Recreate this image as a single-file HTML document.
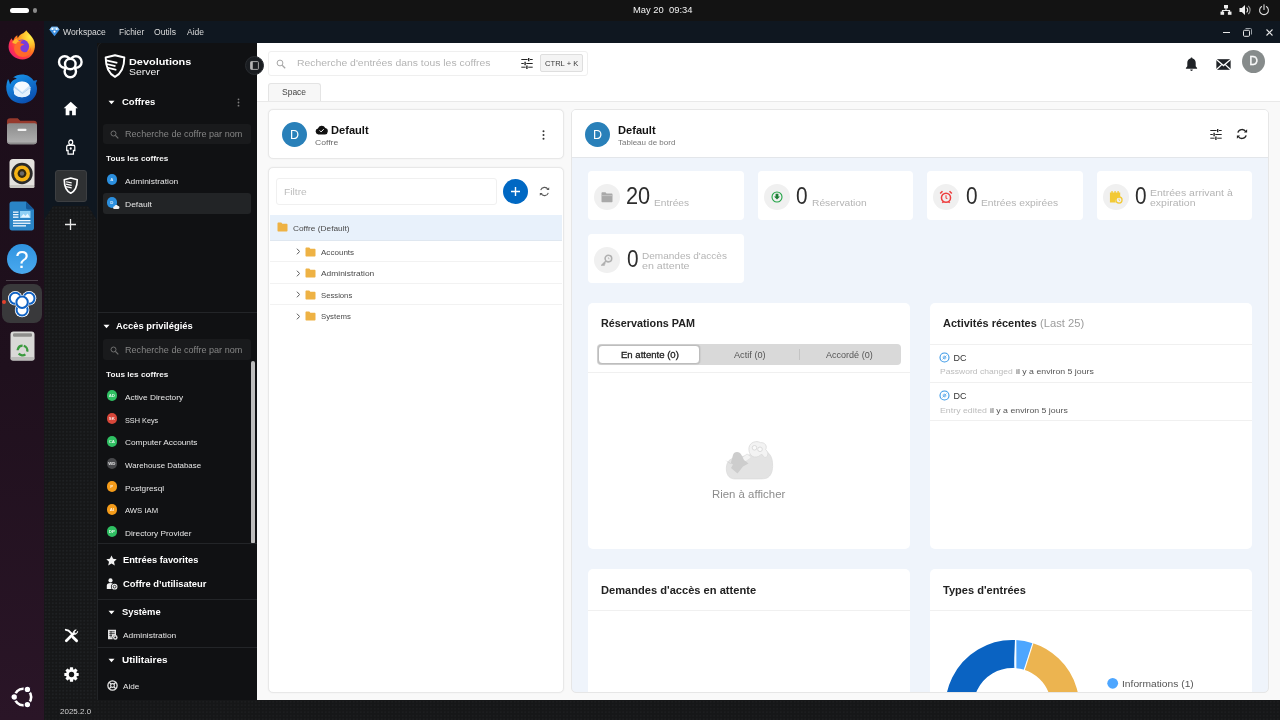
<!DOCTYPE html>
<html lang="fr">
<head>
<meta charset="utf-8">
<title>Workspace</title>
<style>
*{box-sizing:border-box;margin:0;padding:0}
html,body{width:1280px;height:720px;overflow:hidden;background:#131313;font-family:"Liberation Sans",sans-serif;}
.abs{position:absolute}
#root{position:relative;will-change:transform;width:1280px;height:720px;overflow:hidden}
.t{position:absolute;white-space:nowrap;line-height:1;transform-origin:0 50%}
/* top bar */
#topbar{left:0;top:0;width:1280px;height:21px;background:#131313}
/* dock */
#dock{left:0;top:21px;width:44px;height:699px;background:linear-gradient(#1c0e1a,#1f101d 50%,#2a1527 100%)}
/* app */
#titlebar{left:44px;top:21px;width:1236px;height:21.500px;background:#0f1720;z-index:3}
#iconbar{left:44px;top:42px;width:53px;height:658px;background:#0f1720}
#iconbar:before{content:'';position:absolute;left:0;top:164px;width:53px;height:494px;background:radial-gradient(circle,#222427 0.5px,rgba(34,36,39,0) 0.9px) 0 0/3.5px 3.5px,#161718;clip-path:polygon(9px 0,44px 0,53px 14px,53px 100%,0 100%,0 14px)}
#sidebar{left:97px;top:42px;width:160px;height:658px;background:#101113;border-top-left-radius:7px;box-shadow:inset 1px 0 0 #222427}
#bottombar{left:44px;top:700px;width:1236px;height:20px;background:radial-gradient(circle,#1f2022 0.5px,rgba(31,32,34,0) 0.9px) 0 0/3.5px 3.5px,#161718}
#main{left:257px;top:42px;width:1023px;height:658px;background:#fff}
.sbt{color:#e6e6e6;font-size:9px}
.sbh{color:#fff;font-size:10.5px;font-weight:bold}
.sdiv{position:absolute;left:0;width:160px;height:1px;background:#232528}
.ci{position:absolute;width:10.600px;height:10.600px;margin:0.200px 0 0 0;border-radius:50%;color:rgba(255,255,255,.85);font-size:4.300px;font-weight:bold;text-align:center;line-height:12px}
.card{position:absolute;background:#fff;border:1px solid #e8e8e8;border-radius:5px;box-shadow:0 0 1.5px rgba(0,0,0,.07)}
.stat{position:absolute;background:#fff;border-radius:4px;height:49px;width:156px}
.stat .ic{position:absolute;left:6px;top:13px;width:26px;height:26px;border-radius:50%;background:#f0f0f0}
.stat .n{position:absolute;left:38px;top:14px;font-size:24px;color:#2e2e2e;line-height:1}
.stat .l{position:absolute;transform-origin:0 50%;font-size:10.5px;color:#b4b4b4;line-height:10px;white-space:nowrap}
.trow{position:absolute;left:1px;width:291px;height:21px;border-bottom:1px solid #f1f1f1}
.trow .tx{position:absolute;left:50px;top:6px;font-size:8.5px;color:#555;line-height:1;white-space:nowrap}
</style>
</head>
<body>
<div id="root">

<!-- ===== TOP BAR ===== -->
<div id="topbar" class="abs">
  <div class="abs" style="left:10px;top:8px;width:19px;height:5px;border-radius:3px;background:#fff"></div>
  <div class="abs" style="left:33px;top:8px;width:4px;height:5px;border-radius:2px;background:#8a8a8a"></div>
  <div class="t" style="left:633px;top:5.003px;font-size:9.400px;color:#f2f2f2">May 20&nbsp;&nbsp;09:34</div>
  <svg class="abs" style="left:1220px;top:4px" width="12" height="12" viewBox="0 0 12 12"><g fill="#eee"><rect x="4" y="1" width="4" height="3.4"/><rect x="0.5" y="7.6" width="3.6" height="3.2"/><rect x="7.9" y="7.6" width="3.6" height="3.2"/><path d="M5.5 4h1v2h3.6v2h-1V7H2.9v1h-1V6h3.6z"/></g></svg>
  <svg class="abs" style="left:1239px;top:4px" width="13" height="12" viewBox="0 0 13 12"><path d="M0.5 4h2.3L6 1v10L2.8 8H0.5z" fill="#eee"/><path d="M7.6 3.6a3.2 3.2 0 0 1 0 4.8" stroke="#eee" stroke-width="1.1" fill="none"/><path d="M9.2 1.8a5.6 5.6 0 0 1 0 8.4" stroke="#999" stroke-width="1.1" fill="none"/></svg>
  <svg class="abs" style="left:1258px;top:4px" width="12" height="12" viewBox="0 0 12 12"><path d="M3.6 2.5a4.4 4.4 0 1 0 4.8 0" stroke="#ddd" stroke-width="1.1" fill="none" stroke-linecap="round"/><path d="M6 0.8v4.6" stroke="#ddd" stroke-width="1.1" stroke-linecap="round"/></svg>
</div>

<!-- ===== DOCK ===== -->
<div id="dock" class="abs">
  <!-- Firefox -->
  <svg class="abs" style="left:6.500px;top:8.500px" width="31" height="31" viewBox="0 0 30 30">
    <defs>
      <radialGradient id="ffg" cx="0.82" cy="0.22" r="1.05"><stop offset="0" stop-color="#fff04a"/><stop offset="0.28" stop-color="#ffbd2a"/><stop offset="0.5" stop-color="#ff7a1f"/><stop offset="0.72" stop-color="#ff3647"/><stop offset="1" stop-color="#e31587"/></radialGradient>
    </defs>
    <path d="M15 3.5c1.5-1 2.8-2 3.600-3.300c1.200 2 3.500 3.500 5.500 6.500c2.200 3 3.200 6 2.900 9.800C26.400 23.500 21.500 28.500 15 28.500S1.500 23.500 1.500 16.500c0-3.500 1.200-6.500 3-8.500c0.300 1.200 0.800 2 1.500 2.600c0.500-2.500 2-4.500 4-5.600c-0.200 1 0 2 0.500 2.800C11.500 5.800 13 4.500 15 3.500z" fill="url(#ffg)"/>
    <circle cx="14.600" cy="16" r="6.800" fill="#7a3ddb"/>
    <path d="M8.500 13c1.500-2.500 4.500-3.600 7.500-3c-2 0.600-3 1.800-3 3c1.500 0 3 0.400 3.800 1.200c-2.500 0.300-3.600 1.500-3.800 3c-0.200 1.800 1 3.800 3.500 4.300c3 0.600 6-1.500 6.500-4.800c0.800 3.500-1 7.500-5 9c-4.500 1.500-9.500-1-10.800-5.500C6.500 18 7 15 8.500 13z" fill="#ff6a2a"/>
    <path d="M5 12c1-2 2.500-3.200 4.500-3.800c0.500 1.300 1.500 2.300 3 2.800c-1.500 0.200-3 1.200-3.800 2.500C7.500 13 6 12.800 5 12z" fill="#ffb52e"/>
  </svg>
  <!-- Thunderbird -->
  <svg class="abs" style="left:5px;top:51px" width="34" height="33" viewBox="0 0 34 33">
    <defs><linearGradient id="tbg" x1="0" y1="0" x2="0.6" y2="1"><stop offset="0" stop-color="#1a9bf0"/><stop offset="1" stop-color="#0a4fb0"/></linearGradient></defs>
    <path d="M3 7c-2 5-2.500 10-0.500 15c2.500 6 8 9.500 14.500 9.500c8.500 0 15-6.500 15-14.500c0-2-0.400-4-1.200-5.600l1.400-3.400l-3.500 0.800C26 4.500 21.500 2.500 17 2.500c-3.500 0-6.500 1-9 3c1.500 0 2.800 0.500 3.800 1.300C8.500 7.500 6 9.500 5 12.500C4.800 10.500 4 8.500 3 7z" fill="url(#tbg)"/>
    <ellipse cx="17" cy="17.500" rx="8.600" ry="7.800" fill="#cfe4f8"/>
    <path d="M9 15l8 6.500L25 15v7c-2 2.200-4.500 3.300-8 3.300s-6-1.100-8-3.300z" fill="#e6f2fd"/>
    <path d="M9.500 13.500L17 20l7.500-6.500c-1.500-2.500-4-4-7.500-4s-6 1.500-7.500 4z" fill="#f7fbff"/>
    <path d="M9 15l8.500 6.500L26 15" stroke="#a8cdf0" stroke-width="0.800" fill="none"/>
  </svg>
  <!-- Files -->
  <svg class="abs" style="left:6px;top:95px" width="32" height="30" viewBox="0 0 32 30">
    <path d="M1 5.500c0-2 1.200-3.200 3.200-3.200h7.500l2.500 2.400h13.600c2 0 3.200 1.200 3.200 3.200v4H1z" fill="#96392c"/>
    <defs><linearGradient id="flg" x1="0" y1="0" x2="0" y2="1"><stop offset="0" stop-color="#8a8a8a"/><stop offset="1" stop-color="#b2b2b2"/></linearGradient></defs><path d="M1 9.500c0-1.400 1-2.300 2.400-2.300h25.200c1.400 0 2.400 0.900 2.400 2.300v15.500c0 2-1.200 3.200-3.200 3.200H4.200c-2 0-3.200-1.200-3.200-3.200z" fill="url(#flg)"/>
    <path d="M1 24v1c0 2 1.200 3.200 3.200 3.200h23.600c2 0 3.200-1.200 3.200-3.200v-1c0 1.600-1.200 2.600-3.200 2.600H4.200C2.200 26.600 1 25.600 1 24z" fill="#8c8c8c"/>
    <rect x="11.500" y="12.800" width="9" height="2.200" rx="1" fill="#f4f4f4"/>
  </svg>
  <!-- Rhythmbox -->
  <svg class="abs" style="left:8px;top:137px" width="28" height="31" viewBox="0 0 28 31">
    <rect x="1.500" y="1" width="25" height="29" rx="3.500" fill="#e4e2de"/>
    <rect x="1.500" y="27" width="25" height="3" rx="1.500" fill="#c9c7c2"/>
    <circle cx="14" cy="15.500" r="10.700" fill="#2a2a2a"/>
    <circle cx="14" cy="15.500" r="8" fill="#f6b313"/>
    <circle cx="14" cy="15.500" r="4.400" fill="#33280f"/>
    <circle cx="14" cy="15.500" r="2.200" fill="#6a6a6a"/>
  </svg>
  <!-- Writer -->
  <svg class="abs" style="left:9px;top:179px" width="26" height="32" viewBox="0 0 26 32">
    <path d="M3 1.500h14l8 8V28c0 1.500-1 2.500-2.500 2.500h-19.500C1.500 30.500 0.500 29.500 0.500 28V4C0.500 2.500 1.500 1.500 3 1.500z" fill="#2a84c6"/>
    <path d="M17 1.500l8 8h-6c-1.200 0-2-0.800-2-2z" fill="#14599a"/>
    <rect x="11" y="11" width="10.500" height="7" fill="#8fd0f5"/>
    <path d="M11.500 17.500l3-3.500 2 2 2-2.500 2.500 4z" fill="#e8f6ff"/>
    <g fill="#f2f9ff"><rect x="4" y="11.500" width="5.500" height="1.300"/><rect x="4" y="14" width="5.500" height="1.300"/><rect x="4" y="16.500" width="5.500" height="1.300"/><rect x="4" y="20" width="17.500" height="1.300"/><rect x="4" y="22.600" width="17.500" height="1.300"/><rect x="4" y="25.200" width="13" height="1.300"/></g>
  </svg>
  <!-- Help -->
  <svg class="abs" style="left:6px;top:222px" width="32" height="32" viewBox="0 0 32 32">
    <defs><linearGradient id="hg" x1="0" y1="0" x2="0" y2="1"><stop offset="0" stop-color="#2f93e0"/><stop offset="1" stop-color="#4aa9ee"/></linearGradient></defs>
    <circle cx="16" cy="16" r="15" fill="url(#hg)"/>
    <text x="16" y="24.500" font-family="Liberation Sans, sans-serif" font-size="24" fill="#fff" text-anchor="middle">?</text>
  </svg>
  <!-- separator -->
  <div class="abs" style="left:6px;top:259px;width:32px;height:1px;background:#4a3f49"></div>
  <!-- Workspace active -->
  <div class="abs" style="left:2px;top:262.500px;width:40px;height:39.500px;border-radius:8px;background:#39393b"></div>
  <div class="abs" style="left:2px;top:279px;width:3.500px;height:4px;border-radius:2px;background:#e4402c"></div>
  <svg class="abs" style="left:0;top:262px" width="44" height="40" viewBox="0 0 44 40">
    <g fill="#fff"><circle cx="15.300" cy="15.300" r="7.300"/><circle cx="29" cy="15.300" r="7.300"/><circle cx="22.100" cy="27" r="7.300"/></g>
    <g fill="none" stroke="#0f62c4" stroke-width="2"><circle cx="15.300" cy="15.300" r="5.500"/><circle cx="29" cy="15.300" r="5.500"/><circle cx="22.100" cy="27" r="5.500"/></g>
    <circle cx="22.100" cy="19.300" r="7" fill="#fff"/>
    <circle cx="22.100" cy="19.300" r="5.700" fill="none" stroke="#0f62c4" stroke-width="2"/>
  </svg>
  <!-- Trash -->
  <svg class="abs" style="left:9.500px;top:310px" width="25" height="30" viewBox="0 0 25 30">
    <rect x="0.500" y="0.500" width="24" height="29" rx="3" fill="#d9d9d7"/>
    <rect x="0.500" y="26" width="24" height="3.500" rx="1.700" fill="#bcbcba"/>
    <rect x="3" y="2.200" width="19" height="3.600" rx="1.200" fill="#8e8e8c"/>
    <g fill="none" stroke="#3a9a3e" stroke-width="2.300" stroke-dasharray="7.200 3.300"><circle cx="12.500" cy="19.500" r="4.800" transform="rotate(-75 12.500 19.500)"/></g>
  </svg>
  <!-- Ubuntu -->
  <svg class="abs" style="left:9.500px;top:662.500px" width="26" height="26" viewBox="0 0 26 26">
    <circle cx="13" cy="13" r="8.200" fill="none" stroke="#fff" stroke-width="2.600"/>
    <g fill="#fff" stroke="#27142a" stroke-width="1.200"><circle cx="4.200" cy="13" r="3.300"/><circle cx="17.400" cy="5.400" r="3.300"/><circle cx="17.400" cy="20.600" r="3.300"/></g>
  </svg>
</div>

<!-- ===== APP TITLE BAR ===== -->
<div id="titlebar" class="abs">
  <svg class="abs" style="left:5px;top:5px" width="11" height="11" viewBox="0 0 11 11"><path d="M2.600 0.800h5.800l2.200 3-5.100 6.400L0.400 3.800z" fill="#3d8fe0"/><path d="M2.600 0.800h5.800l2.200 3H0.400z" fill="#8cc4f5"/><circle cx="3.400" cy="3" r="1" fill="#fff"/><circle cx="7.600" cy="3" r="1" fill="#fff"/><circle cx="5.500" cy="5.600" r="1.100" fill="#fff"/></svg>
  <div class="t" style="left:18.500px;top:7.003px;font-size:8.3px;color:#dcdcdc;transform:scaleX(1.036)">Workspace</div>
  <div class="t" style="left:74.500px;top:7.013px;font-size:8.3px;color:#dcdcdc;transform:scaleX(1.012)">Fichier</div>
  <div class="t" style="left:110px;top:7.003px;font-size:8.3px;color:#dcdcdc;transform:scaleX(1.036)">Outils</div>
  <div class="t" style="left:143px;top:7px;font-size:8.3px;color:#dcdcdc;transform:scaleX(1.024)">Aide</div>
  <div class="abs" style="left:1179px;top:11px;width:7px;height:1px;background:#e8e8e8"></div>
  <svg class="abs" style="left:1199px;top:7px" width="9" height="9" viewBox="0 0 9 9"><rect x="0.500" y="2.300" width="6" height="6" rx="1" fill="none" stroke="#e8e8e8" stroke-width="1"/><path d="M2.500 0.500h5a1 1 0 0 1 1 1v5" fill="none" stroke="#9aa0a6" stroke-width="1"/></svg>
  <svg class="abs" style="left:1222px;top:8px" width="7" height="7" viewBox="0 0 7 7"><path d="M0.500 0.500l6 6M6.500 0.500l-6 6" stroke="#e8e8e8" stroke-width="1.100"/></svg>
</div>

<!-- ===== ICON BAR ===== -->
<div id="iconbar" class="abs">
  <!-- logo -->
  <svg class="abs" style="left:12.700px;top:10.100px" width="27" height="28" viewBox="0 0 27 28"><g fill="none" stroke="#fff" stroke-width="2.400"><circle cx="7.700" cy="10" r="5.700"/><circle cx="18.900" cy="10" r="5.700"/><circle cx="13.300" cy="19.600" r="5.700"/><circle cx="13.300" cy="12" r="5.300" fill="#0f1720"/></g></svg>
  <!-- home -->
  <svg class="abs" style="left:18.800px;top:58.500px" width="15.500" height="15" viewBox="0 0 14 14" preserveAspectRatio="none"><path d="M7 0.800L0.600 6.800h1.800v6.400h3.400V9h2.400v4.200h3.400V6.800h1.800z" fill="#fff"/></svg>
  <!-- person -->
  <svg class="abs" style="left:22px;top:97px" width="9.500" height="16" viewBox="0 0 11 16" preserveAspectRatio="none"><g fill="none" stroke="#fff" stroke-width="1.400"><circle cx="5.500" cy="3.300" r="2.300"/><path d="M2.300 6.300h6.400c0.900 0 1.500 0.600 1.500 1.500v3.700h-1.600v3.600H2.400v-3.600H0.800V7.800c0-0.900 0.600-1.500 1.500-1.500z"/></g><circle cx="5.500" cy="9.500" r="1.200" fill="#fff"/></svg>
  <!-- selected shield -->
  <div class="abs" style="left:11px;top:128px;width:32px;height:31.500px;border-radius:3px;background:#2f3133;border:1px solid #3d3f42"></div>
  <svg class="abs" style="left:19px;top:135px" width="15.500" height="17.500" viewBox="0 0 15 17"><path d="M7.500 1L1.200 2.600c0 5.400 1 10.400 6.300 13.200c5.300-2.800 6.300-7.800 6.300-13.200z" fill="none" stroke="#fff" stroke-width="1.600" stroke-linejoin="round"/><path d="M3 4.600l5.400 1.200M3 7l5.400 1.200M3 9.400l5.400 1.200" stroke="#fff" stroke-width="1.200"/></svg>
  <!-- plus -->
  <svg class="abs" style="left:21px;top:177px" width="11" height="11" viewBox="0 0 11 11"><path d="M5.500 0v11M0 5.500h11" stroke="#e8e8e8" stroke-width="1.300"/></svg>
  <!-- tools -->
  <svg class="abs" style="left:19.500px;top:586px" width="15" height="15" viewBox="0 0 15 15"><g stroke="#fff" fill="none"><path d="M2.300 12.700L8.800 6.200" stroke-width="2.700" stroke-linecap="round"/><path d="M13.700 3.200a3.300 3.300 0 0 1-4.500 3.100a3.300 3.300 0 0 1 3.100-4.500l-1.800 1.900l0.300 1.500l1.500 0.300z" stroke-width="0.600" fill="#fff"/><path d="M1.800 1.800l2.700 0.700l3.200 3.200" stroke-width="1.900" stroke-linecap="round"/><path d="M9 9.200l3.600 3.600" stroke-width="2.900" stroke-linecap="round"/></g></svg>
  <!-- gear -->
  <svg class="abs" style="left:19.500px;top:624.700px" width="15" height="15" viewBox="0 0 14 14"><g fill="#fff"><circle cx="7" cy="7" r="5.100"/><rect x="5.500" y="0.300" width="3" height="13.400" rx="0.500"/><rect x="5.500" y="0.300" width="3" height="13.400" rx="0.500" transform="rotate(45 7 7)"/><rect x="5.500" y="0.300" width="3" height="13.400" rx="0.500" transform="rotate(90 7 7)"/><rect x="5.500" y="0.300" width="3" height="13.400" rx="0.500" transform="rotate(135 7 7)"/></g><circle cx="7" cy="7" r="2.500" fill="#161718"/></svg>
</div>

<!-- ===== SIDEBAR ===== -->
<div id="sidebar" class="abs">
  <!-- coords relative to sidebar: left=97, top=42 -->
  <svg class="abs" style="left:6.700px;top:12.400px" width="22" height="24.500" viewBox="0 0 22 25"><path d="M11 1.300L1.500 3.600c0 8 1.500 15.500 9.500 19.800c8-4.300 9.500-11.800 9.500-19.800z" fill="none" stroke="#fff" stroke-width="2" stroke-linejoin="round"/><path d="M2 6.400l11.400 2.600M2.300 10.200l9.200 2.100M3 14l9.400 2.100" stroke="#fff" stroke-width="1.800"/></svg>
  <div class="t" style="left:32px;top:15.009px;font-size:9.6px;font-weight:bold;color:#fff;transform:scaleX(1.135)">Devolutions</div>
  <div class="t" style="left:32px;top:25px;font-size:9.6px;color:#f0f0f0;transform:scaleX(1.086)">Server</div>
  <!-- Coffres -->
  <svg class="abs" style="left:11px;top:58px" width="7" height="5" viewBox="0 0 7 5"><path d="M0.500 0.800h6L3.500 4.200z" fill="#fff"/></svg>
  <div class="t sbh" style="left:25px;top:56.001px;font-size:9.03px;transform:scaleX(1.052)">Coffres</div>
  <svg class="abs" style="left:140px;top:56px" width="3" height="9" viewBox="0 0 3 9"><g fill="#7d7d7d"><circle cx="1.500" cy="1.300" r="0.900"/><circle cx="1.500" cy="4.500" r="0.900"/><circle cx="1.500" cy="7.700" r="0.900"/></g></svg>
  <div class="abs" style="left:6px;top:82px;width:148px;height:20px;border-radius:3px;background:#191a1c"></div>
  <svg class="abs" style="left:13px;top:88px" width="9" height="9" viewBox="0 0 9 9"><circle cx="3.500" cy="3.500" r="2.500" fill="none" stroke="#707070" stroke-width="1"/><path d="M5.400 5.400l2.900 2.900" stroke="#707070" stroke-width="1.200"/></svg>
  <div class="t" style="left:28px;top:88.006px;font-size:8.4px;color:#858585;transform:scaleX(1.083)">Recherche de coffre par nom</div>
  <div class="t" style="left:8.500px;top:113.006px;font-size:7.75px;font-weight:bold;color:#f4f4f4;transform:scaleX(1.058)">Tous les coffres</div>
  <div class="ci" style="left:9.500px;top:132px;background:#2b8fde">A</div>
  <div class="t sbt" style="left:27.500px;top:136.012px;font-size:7.75px;transform:scaleX(1.084)">Administration</div>
  <div class="abs" style="left:6px;top:151px;width:148px;height:21px;border-radius:3px;background:#222426"></div>
  <div class="ci" style="left:9.500px;top:155px;background:#2b8fde">D</div>
  <svg class="abs" style="left:16px;top:162.500px" width="6.500" height="4.300" viewBox="0 0 9 6"><path d="M2.200 5.600a2 2 0 0 1-0.200-4a2.600 2.600 0 0 1 4.800-0.200a2.100 2.100 0 0 1 0.200 4.200z" fill="#f0f0f0"/></svg>
  <div class="t sbt" style="left:27.500px;top:159px;font-size:7.75px;transform:scaleX(1.097)">Default</div>
  <div class="sdiv" style="top:270px"></div>
  <!-- Acces privilegies -->
  <svg class="abs" style="left:6px;top:282px" width="7" height="5" viewBox="0 0 7 5"><path d="M0.500 0.800h6L3.500 4.200z" fill="#fff"/></svg>
  <div class="t sbh" style="left:19px;top:280.013px;font-size:9.03px;transform:scaleX(1.041)">Accès privilégiés</div>
  <div class="abs" style="left:6px;top:297px;width:148px;height:21px;border-radius:3px;background:#191a1c"></div>
  <svg class="abs" style="left:13px;top:303.500px" width="9" height="9" viewBox="0 0 9 9"><circle cx="3.500" cy="3.500" r="2.500" fill="none" stroke="#707070" stroke-width="1"/><path d="M5.400 5.400l2.900 2.900" stroke="#707070" stroke-width="1.200"/></svg>
  <div class="t" style="left:28px;top:304.003px;font-size:8.4px;color:#858585;transform:scaleX(1.083)">Recherche de coffre par nom</div>
  <div class="abs" style="left:153.500px;top:319px;width:4px;height:183px;border-radius:2px;background:#bdbdbd"></div>
  <div class="t" style="left:8.500px;top:329.003px;font-size:7.75px;font-weight:bold;color:#f4f4f4;transform:scaleX(1.058)">Tous les coffres</div>
  <div class="ci" style="left:9.500px;top:348px;background:#2fbf62">AD</div>
  <div class="t sbt" style="left:27.500px;top:352.009px;font-size:7.75px;transform:scaleX(1.071)">Active Directory</div>
  <div class="ci" style="left:9.500px;top:371px;background:#d8473a">SK</div>
  <div class="t sbt" style="left:27.500px;top:375.009px;font-size:7.75px;transform:scaleX(0.942)">SSH Keys</div>
  <div class="ci" style="left:9.500px;top:394px;background:#2fbf62">CA</div>
  <div class="t sbt" style="left:27.500px;top:397.009px;font-size:7.75px;transform:scaleX(1.071)">Computer Accounts</div>
  <div class="ci" style="left:9.500px;top:416px;background:#47484b">WD</div>
  <div class="t sbt" style="left:27.500px;top:420.003px;font-size:7.75px;transform:scaleX(1.019)">Warehouse Database</div>
  <div class="ci" style="left:9.500px;top:439px;background:#f59c1a">P</div>
  <div class="t sbt" style="left:27.500px;top:443.009px;font-size:7.75px;transform:scaleX(1.071)">Postgresql</div>
  <div class="ci" style="left:9.500px;top:462px;background:#f59c1a">AI</div>
  <div class="t sbt" style="left:27.500px;top:465.009px;font-size:7.75px;transform:scaleX(0.994)">AWS IAM</div>
  <div class="ci" style="left:9.500px;top:484px;background:#2fbf62">DP</div>
  <div class="t sbt" style="left:27.500px;top:488.009px;font-size:7.75px;transform:scaleX(1.071)">Directory Provider</div>
  <div class="sdiv" style="top:501px"></div>
  <!-- favorites -->
  <svg class="abs" style="left:9px;top:513px" width="11" height="11" viewBox="0 0 11 11"><path d="M5.500 0.400l1.600 3.400l3.600 0.400l-2.700 2.500l0.800 3.700l-3.300-1.900l-3.300 1.900l0.800-3.700L0.300 4.200l3.600-0.400z" fill="#f2f2f2"/></svg>
  <div class="t sbh" style="left:25.500px;top:514.01px;font-size:9.03px;transform:scaleX(1.03)">Entrées favorites</div>
  <svg class="abs" style="left:9px;top:536px" width="12" height="12" viewBox="0 0 12 12"><g fill="#f2f2f2"><circle cx="4.500" cy="2.400" r="2.100"/><path d="M0.800 11V7.500c0-1.600 1.200-2.600 3.700-2.600c1 0 1.800 0.200 2.400 0.500c-1.300 0.700-2 1.900-2 3.300c0 0.900 0.300 1.700 0.800 2.300z"/><circle cx="8.600" cy="8.700" r="2.900"/></g><circle cx="8.600" cy="8.700" r="1.400" fill="none" stroke="#101113" stroke-width="0.800"/></svg>
  <div class="t sbh" style="left:25.500px;top:538.013px;font-size:9.03px;transform:scaleX(1.041)">Coffre d’utilisateur</div>
  <div class="sdiv" style="top:557px"></div>
  <svg class="abs" style="left:11px;top:568px" width="7" height="5" viewBox="0 0 7 5"><path d="M0.500 0.800h6L3.500 4.200z" fill="#fff"/></svg>
  <div class="t sbh" style="left:25px;top:566.001px;font-size:9.03px;transform:scaleX(1.041)">Système</div>
  <svg class="abs" style="left:10px;top:587px" width="11" height="11" viewBox="0 0 11 11"><path d="M1 0.800h8v5.300a3 3 0 0 0-3.300 4.100H1z" fill="#e4e4e4"/><g stroke="#101113" stroke-width="0.700"><path d="M2.300 2.800h5.400M2.300 4.600h5.400M2.300 6.400h2.700M4 2v6.500"/></g><circle cx="8.300" cy="8.400" r="2.300" fill="#e4e4e4"/><circle cx="8.300" cy="8.400" r="0.900" fill="#101113"/></svg>
  <div class="t sbt" style="left:25.500px;top:590.013px;font-size:7.75px;transform:scaleX(1.084)">Administration</div>
  <div class="sdiv" style="top:605px"></div>
  <svg class="abs" style="left:11px;top:616px" width="7" height="5" viewBox="0 0 7 5"><path d="M0.500 0.800h6L3.500 4.200z" fill="#fff"/></svg>
  <div class="t sbh" style="left:25px;top:614.013px;font-size:9.03px;transform:scaleX(1.107)">Utilitaires</div>
  <svg class="abs" style="left:10px;top:638px" width="11" height="11" viewBox="0 0 11 11"><circle cx="5.500" cy="5.500" r="4.600" fill="none" stroke="#e8e8e8" stroke-width="1.300"/><circle cx="5.500" cy="5.500" r="1.900" fill="none" stroke="#e8e8e8" stroke-width="1.100"/><path d="M2.200 2.200l2 2M8.800 2.200l-2 2M2.200 8.800l2-2M8.800 8.800l-2-2" stroke="#e8e8e8" stroke-width="1.300"/></svg>
  <div class="t sbt" style="left:25.500px;top:641.006px;font-size:7.75px;transform:scaleX(1.058)">Aide</div>
</div>

<!-- ===== MAIN ===== -->
<div id="main" class="abs">
  <!-- coords relative to main: left=257, top=42 -->
  <!-- sidebar toggle -->
  <div class="abs" style="left:-12px;top:14px;width:19px;height:19px;border-radius:50%;background:#1a1d21;border:1px solid #2a2d31"></div>
  <svg class="abs" style="left:-7px;top:19px" width="9" height="9" viewBox="0 0 9 9"><rect x="0.600" y="0.600" width="7.800" height="7.800" rx="0.800" fill="none" stroke="#b4b4b4" stroke-width="0.900"/><rect x="0.600" y="0.600" width="2.200" height="7.800" fill="#b4b4b4"/></svg>
  <!-- search -->
  <div class="abs" style="left:11px;top:8.500px;width:320px;height:25.500px;border:1px solid #efefef;border-radius:3px;background:#fff"></div>
  <svg class="abs" style="left:19px;top:17px" width="10" height="10" viewBox="0 0 10 10"><circle cx="4" cy="4" r="2.900" fill="none" stroke="#a6a6a6" stroke-width="1"/><path d="M6.200 6.200l3 3" stroke="#a6a6a6" stroke-width="1.300"/></svg>
  <div class="t" style="left:39.900px;top:16.01px;font-size:9.498px;color:#b4b4b4;transform:scaleX(1.095)">Recherche d'entrées dans tous les coffres</div>
  <svg class="abs" style="left:263.500px;top:16px" width="12" height="11" viewBox="0 0 12 11"><g stroke="#222" stroke-width="1" fill="none"><path d="M0.300 1.500h6.300M9 1.500h2.700M0.300 5.500h2.500M5.300 5.500h6.400M0.300 9.200h4.300M7.200 9.200h4.500"/><path d="M7.700 0v3.200M4.100 3.800v3.400M5.900 7.400v3.600" stroke-width="1.400"/></g></svg>
  <div class="abs" style="left:283px;top:12px;width:43px;height:18px;border:1px solid #dedede;border-radius:2px;background:#f4f4f4"></div>
  <div class="t" style="left:288px;top:19.008px;font-size:6.941px;color:#3a3a3a;transform:scaleX(1.095)">CTRL + K</div>
  <!-- top right icons -->
  <svg class="abs" style="left:928px;top:14.700px" width="13" height="15" viewBox="0 0 13 15"><path d="M6.500 0.600c0.600 0 1 0.400 1 0.900c2 0.500 3.200 2.200 3.200 4.300v3.400l1.400 1.800v0.800H0.900v-0.800l1.400-1.800V5.800c0-2.100 1.200-3.800 3.200-4.300c0-0.500 0.400-0.900 1-0.900z" fill="#1f2226"/><path d="M5.200 12.600h2.600a1.300 1.300 0 0 1-2.600 0z" fill="#1f2226"/></svg>
  <svg class="abs" style="left:959px;top:16.900px" width="15" height="11" viewBox="0 0 16 12"><rect x="0.200" y="0.200" width="15.600" height="11.600" fill="#1f2226"/><path d="M-0.200 0.200L8 7.200l8.200-7M-0.200 12l6-5.600M16.200 12l-6-5.600" fill="none" stroke="#fff" stroke-width="1.400"/></svg>
  <div class="abs" style="left:985px;top:8px;width:23px;height:23px;border-radius:50%;background:#868b8b"></div>
  <div class="t" style="left:992.300px;top:13px;font-size:12px;color:#fafafa;-webkit-text-stroke:0.350px #fafafa">D</div>
  <!-- tab -->
  <div class="abs" style="left:0;top:59px;width:1023px;height:599px;background:#f9f9f9;border-top:1px solid #e9e9e9"></div>
  <div class="abs" style="left:11px;top:40.500px;width:53px;height:18.500px;border:1px solid #e4e4e4;border-bottom:none;border-radius:3px 3px 0 0;background:#f7f7f7"></div>
  <div class="t" style="left:24.800px;top:46px;font-size:8.3px;color:#444;transform:scaleX(1.024)">Space</div>

  <!-- LEFT: vault header card -->
  <div class="card" style="left:11px;top:66.500px;width:296px;height:50.500px"></div>
  <div class="abs" style="left:25px;top:79.500px;width:25px;height:25px;border-radius:50%;background:#2980b9"></div>
  <div class="t" style="left:33px;top:87.013px;font-size:12.500px;color:#fff">D</div>
  <svg class="abs" style="left:58px;top:83px" width="13" height="10" viewBox="0 0 13 10"><path d="M3.300 9.400a3 3 0 0 1-0.400-5.900a4 4 0 0 1 7.400-0.400a3.200 3.200 0 0 1-0.300 6.300z" fill="#111"/><path d="M4.600 5.400l1.500 1.500l2.600-2.700" stroke="#fff" stroke-width="1" fill="none"/></svg>
  <div class="t" style="left:74px;top:84.001px;font-size:10.33px;font-weight:bold;color:#111;transform:scaleX(1.075)">Default</div>
  <div class="t" style="left:58.000px;top:97.013px;font-size:7.75px;color:#6a6a6a;transform:scaleX(1.106)">Coffre</div>
  <svg class="abs" style="left:285px;top:88px" width="3" height="10" viewBox="0 0 3 10"><g fill="#333"><circle cx="1.500" cy="1.300" r="1"/><circle cx="1.500" cy="5" r="1"/><circle cx="1.500" cy="8.700" r="1"/></g></svg>

  <!-- LEFT: tree card -->
  <div class="card" style="left:11px;top:125px;width:296px;height:526px"></div>
  <div class="abs" style="left:19px;top:136px;width:221px;height:27px;border:1px solid #f0f0f0;border-radius:3px;background:#fff"></div>
  <div class="t" style="left:26.500px;top:145px;font-size:9.406px;color:#bdbdbd;transform:scaleX(1.095)">Filtre</div>
  <div class="abs" style="left:246px;top:137px;width:25px;height:25px;border-radius:50%;background:#0068c3"></div>
  <svg class="abs" style="left:253px;top:144px" width="11" height="11" viewBox="0 0 11 11"><path d="M5.500 1v9M1 5.500h9" stroke="#fff" stroke-width="1.400"/></svg>
  <svg class="abs" style="left:282px;top:144px" width="11" height="11" viewBox="0 0 11 11"><g transform="translate(11,0) scale(-1,1)"><g fill="none" stroke="#5a5a5a" stroke-width="1.100"><path d="M9.300 4.200a4 4 0 0 0-7.300-0.800"/><path d="M1.700 6.800a4 4 0 0 0 7.300 0.800"/></g><path d="M0.800 1.200v2.900h2.900z" fill="#5a5a5a"/><path d="M10.200 9.800V6.900H7.300z" fill="#5a5a5a"/></g></svg>
  <div class="abs" style="left:13px;top:173px;width:292px;height:26px;background:#e8f1fb;border-bottom:1px solid #dfe7f0"></div>
  <svg class="abs" style="left:20px;top:180px" width="11" height="10" viewBox="0 0 11 10"><path d="M0.500 1.600c0-0.600 0.400-1 1-1h2.800l1 1.200h4.200c0.600 0 1 0.400 1 1v5.800c0 0.600-0.400 1-1 1h-8c-0.600 0-1-0.400-1-1z" fill="#eeb244"/></svg>
  <div class="t" style="left:35.500px;top:183.009px;font-size:7.75px;color:#4a4a4a;transform:scaleX(1.071)">Coffre (Default)</div>
  <svg class="abs" style="left:38.500px;top:206px" width="4.500" height="7" viewBox="0 0 5 8"><path d="M1 0.800l3 3.200l-3 3.200" fill="none" stroke="#555" stroke-width="1.100"/></svg>
  <svg class="abs" style="left:48px;top:204.5px" width="11" height="10" viewBox="0 0 11 10"><path d="M0.500 1.600c0-0.600 0.400-1 1-1h2.800l1 1.200h4.200c0.600 0 1 0.400 1 1v5.800c0 0.600-0.400 1-1 1h-8c-0.600 0-1-0.400-1-1z" fill="#eeb244"/></svg>
  <div class="t" style="left:63.500px;top:207.008px;font-size:7.75px;color:#4a4a4a;transform:scaleX(1.039)">Accounts</div>
  <div class="abs" style="left:13px;top:219px;width:292px;height:1px;background:#f2f2f2"></div>
  <svg class="abs" style="left:38.500px;top:227.5px" width="4.500" height="7" viewBox="0 0 5 8"><path d="M1 0.800l3 3.200l-3 3.200" fill="none" stroke="#555" stroke-width="1.100"/></svg>
  <svg class="abs" style="left:48px;top:226px" width="11" height="10" viewBox="0 0 11 10"><path d="M0.500 1.600c0-0.600 0.400-1 1-1h2.800l1 1.200h4.200c0.600 0 1 0.400 1 1v5.800c0 0.600-0.400 1-1 1h-8c-0.600 0-1-0.400-1-1z" fill="#eeb244"/></svg>
  <div class="t" style="left:63.500px;top:228.003px;font-size:7.75px;color:#4a4a4a;transform:scaleX(1.084)">Administration</div>
  <div class="abs" style="left:13px;top:240.5px;width:292px;height:1px;background:#f2f2f2"></div>
  <svg class="abs" style="left:38.500px;top:249px" width="4.500" height="7" viewBox="0 0 5 8"><path d="M1 0.800l3 3.200l-3 3.200" fill="none" stroke="#555" stroke-width="1.100"/></svg>
  <svg class="abs" style="left:48px;top:247.5px" width="11" height="10" viewBox="0 0 11 10"><path d="M0.500 1.600c0-0.600 0.400-1 1-1h2.800l1 1.200h4.200c0.600 0 1 0.400 1 1v5.800c0 0.600-0.400 1-1 1h-8c-0.600 0-1-0.400-1-1z" fill="#eeb244"/></svg>
  <div class="t" style="left:63.500px;top:250.003px;font-size:7.75px;color:#4a4a4a;transform:scaleX(0.994)">Sessions</div>
  <div class="abs" style="left:13px;top:262px;width:292px;height:1px;background:#f2f2f2"></div>
  <svg class="abs" style="left:38.500px;top:270.5px" width="4.500" height="7" viewBox="0 0 5 8"><path d="M1 0.800l3 3.200l-3 3.200" fill="none" stroke="#555" stroke-width="1.100"/></svg>
  <svg class="abs" style="left:48px;top:269px" width="11" height="10" viewBox="0 0 11 10"><path d="M0.500 1.600c0-0.600 0.400-1 1-1h2.800l1 1.200h4.200c0.600 0 1 0.400 1 1v5.800c0 0.600-0.400 1-1 1h-8c-0.600 0-1-0.400-1-1z" fill="#eeb244"/></svg>
  <div class="t" style="left:63.500px;top:271.003px;font-size:7.75px;color:#4a4a4a;transform:scaleX(1.006)">Systems</div>

  <!-- RIGHT: dashboard panel -->
  <div class="abs" style="left:314px;top:66.500px;width:698px;height:584.500px;border:1px solid #e6e6e6;border-radius:5px;background:#eff4fb;overflow:hidden">
    <div class="abs" style="left:0;top:0;width:698px;height:48.500px;background:#fff;border-bottom:1px solid #e3e6ea"></div>
  </div>
  <div class="abs" style="left:328px;top:79.500px;width:25px;height:25px;border-radius:50%;background:#2980b9"></div>
  <div class="t" style="left:336px;top:87.013px;font-size:12.500px;color:#fff">D</div>
  <div class="t" style="left:361px;top:84.013px;font-size:10.33px;font-weight:bold;color:#111;transform:scaleX(1.075)">Default</div>
  <div class="t" style="left:361px;top:97.003px;font-size:7.75px;color:#777;transform:scaleX(1.032)">Tableau de bord</div>
  <svg class="abs" style="left:952.500px;top:87px" width="12" height="11" viewBox="0 0 12 11"><g stroke="#222" stroke-width="1" fill="none"><path d="M0.300 1.500h6.300M9 1.500h2.700M0.300 5.500h2.500M5.300 5.500h6.400M0.300 9.200h4.300M7.200 9.200h4.500"/><path d="M7.700 0v3.200M4.100 3.800v3.400M5.900 7.400v3.600" stroke-width="1.400"/></g></svg>
  <svg class="abs" style="left:979.300px;top:86.300px" width="12" height="12" viewBox="0 0 11 11"><g transform="translate(11,0) scale(-1,1)"><g fill="none" stroke="#222" stroke-width="1.200"><path d="M9.300 4.200a4 4 0 0 0-7.300-0.800"/><path d="M1.700 6.800a4 4 0 0 0 7.300 0.800"/></g><path d="M0.800 1.200v2.900h2.900z" fill="#222"/><path d="M10.200 9.800V6.900H7.300z" fill="#222"/></g></svg>

  <!-- stat cards -->
  <div class="stat" style="left:331px;top:129px"><div class="ic"></div>
    <svg class="abs" style="left:13px;top:20px" width="12" height="12" viewBox="0 0 12 12"><path d="M0.500 2.200c0-0.600 0.400-1 1-1h3l1 1.300h5c0.600 0 1 0.400 1 1v6.800c0 0.600-0.400 1-1 1h-9c-0.600 0-1-0.400-1-1z" fill="#a9a9a9"/><path d="M0.500 4.600h11" stroke="#c9c9c9" stroke-width="0.800"/></svg>
    <div class="n" style="left:38px;font-size:23.400px;transform:scaleX(0.93);transform-origin:0 0">20</div><div class="l" style="left:65.700px;top:27.001px;font-size:9.315px;transform:scaleX(1.095)">Entrées</div></div>
  <div class="stat" style="left:500.500px;top:129px;width:155.500px"><div class="ic"></div>
    <svg class="abs" style="left:13px;top:20px" width="12" height="12" viewBox="0 0 12 12"><circle cx="6" cy="6" r="5" fill="none" stroke="#23a447" stroke-width="1.100"/><path d="M4.600 2.800h2.800v2.600h1.600L6 8.600L3 5.400h1.600z" fill="#1d7d35"/></svg>
    <div class="n" style="left:38.600px;font-size:23.400px;transform:scaleX(0.89);transform-origin:0 0">0</div><div class="l" style="left:54px;top:27.006px;font-size:9.406px;transform:scaleX(1.095)">Réservation</div></div>
  <div class="stat" style="left:670px;top:129px;width:155.500px"><div class="ic"></div>
    <svg class="abs" style="left:12px;top:19px" width="14" height="14" viewBox="0 0 12 12"><circle cx="6" cy="6.600" r="3.900" fill="none" stroke="#ee3e3e" stroke-width="1.300"/><path d="M6 4.600v2.200l1.200 0.800" stroke="#ee3e3e" stroke-width="0.900" fill="none"/><path d="M1 3l2-2M11 3l-2-2M2.800 11l1-1M9.200 11l-1-1" stroke="#ee3e3e" stroke-width="1.300"/></svg>
    <div class="n" style="left:38.600px;font-size:23.400px;transform:scaleX(0.89);transform-origin:0 0">0</div><div class="l" style="left:53.500px;top:27.006px;font-size:9.406px;transform:scaleX(1.095)">Entrées expirées</div></div>
  <div class="stat" style="left:839.500px;top:129px;width:155.500px"><div class="ic"></div>
    <svg class="abs" style="left:12px;top:19px" width="14" height="14" viewBox="0 0 12 12"><path d="M0.800 2.200h8.800v4a3.300 3.300 0 0 0-3.800 4.600H0.800z" fill="#f2c935"/><path d="M2.600 0.800v2M5.200 0.800v2M7.800 0.800v2" stroke="#f2c935" stroke-width="1.100"/><circle cx="8.600" cy="8.600" r="2.600" fill="none" stroke="#f2c935" stroke-width="1.100"/><path d="M8.600 7.300v1.400l0.900 0.500" stroke="#f2c935" stroke-width="0.700" fill="none"/></svg>
    <div class="n" style="left:38.600px;font-size:23.400px;transform:scaleX(0.89);transform-origin:0 0">0</div><div class="l" style="left:53px;top:17.005px;font-size:9.589px;transform:scaleX(1.095)">Entrées arrivant à</div><div class="l" style="left:53px;top:27.008px;font-size:9.589px;transform:scaleX(1.095)">expiration</div></div>
  <div class="stat" style="left:331px;top:191.500px"><div class="ic"></div>
    <svg class="abs" style="left:13px;top:20px" width="12" height="12" viewBox="0 0 12 12"><circle cx="7.400" cy="4.600" r="3.300" fill="none" stroke="#b0b0b0" stroke-width="1.600"/><path d="M5 7l-4 4h2v-1.400h1.400" stroke="#b0b0b0" stroke-width="1.500" fill="none"/><path d="M7.400 3.200v1.600h1.200" stroke="#b0b0b0" stroke-width="0.700" fill="none"/></svg>
    <div class="n" style="left:38.600px;font-size:23.400px;transform:scaleX(0.89);transform-origin:0 0">0</div><div class="l" style="left:54px;top:17.505px;font-size:9.178px;transform:scaleX(1.095)">Demandes d'accès</div><div class="l" style="left:54px;top:27.514px;font-size:9.772px;transform:scaleX(1.095)">en attente</div></div>
  <!-- PAM card : abs coords x588-910, y303-549 -> rel left 331 top 261 -->
  <div class="abs" style="left:331px;top:261px;width:322px;height:246px;background:#fff;border-radius:5px"></div>
  <div class="t" style="left:344px;top:277.001px;font-size:10.33px;font-weight:bold;color:#222;transform:scaleX(1.045)">Réservations PAM</div>
  <div class="abs" style="left:340px;top:302px;width:304px;height:21px;border-radius:4px;background:#d9d9d9"></div>
  <div class="abs" style="left:341px;top:303px;width:102px;height:19px;border-radius:4px;background:#fff;border:1px solid #bdbdbd;box-shadow:0 0 1.500px rgba(0,0,0,.25)"></div>
  <div class="t" style="left:363.500px;top:309.008px;font-size:8.721px;color:#222;transform:scaleX(1.095);-webkit-text-stroke:0.300px #222">En attente (0)</div>
  <div class="t" style="left:476.500px;top:309.012px;font-size:8.402px;color:#555;transform:scaleX(1.095)">Actif (0)</div>
  <div class="abs" style="left:542px;top:307px;width:1px;height:11px;background:#c4c4c4"></div>
  <div class="t" style="left:569px;top:310.005px;font-size:8.265px;color:#555;transform:scaleX(1.095)">Accordé (0)</div>
  <div class="abs" style="left:331px;top:330px;width:322px;height:1px;background:#f0f0f0"></div>
  <!-- illustration -->
  <svg class="abs" style="left:468px;top:399px" width="50" height="40" viewBox="0 0 50 40">
    <path d="M1.500 30c-0.600-4 0.200-8 2.500-10.500c3-2.800 8-3.500 13-4c6-0.800 10-2.500 14-4.500c5-2.300 10-1.500 13 1.500c3 3.200 3.800 8 3.600 13c-0.200 5-1.600 9.500-5.600 11.500c-2 0.800-5 0.900-9 0.900H10C5 37.900 2.200 35 1.500 30z" fill="#e3e3e3" stroke="#dadada" stroke-width="0.700"/>
    <path d="M24 6.500c0.500-3 3-5.500 6.500-5.800c2-0.300 3.600 0.200 5 1c2-0.300 4 0.500 5 2c1.200 1.800 0.800 3.600 0.200 5c1.800 1.500 2.600 3.500 2 5.500c-0.500 1.600-1.800 2.300-3.200 2.200l-3-3.400c-1.500 2-4 3.400-7 3c-3.500-0.500-6-4-5.500-9.500z" fill="#f3f3f3" stroke="#d9d9d9" stroke-width="0.800"/>
    <circle cx="29.500" cy="6.800" r="2.300" fill="#fafafa" stroke="#d4d4d4" stroke-width="0.800"/><circle cx="35" cy="8.300" r="2.300" fill="#fafafa" stroke="#d4d4d4" stroke-width="0.800"/>
    <path d="M22 13c-3 2.500-6 4.500-9 6l2.500 3.500c4-1 8-3.500 11-6.500z" fill="#f3f3f3" stroke="#dcdcdc" stroke-width="0.700"/>
    <path d="M0 19l5.500 4l2.500-9c0.500-2 2-3 4-3c2 0 3.500 1 4.500 3l2.500 5l4.500 3.500l-5.500 3l-5.500 7l-6.500-5.500l2-3.500z" fill="#cdcdcd"/>
  </svg>
  <div class="t" style="left:455px;top:448.011px;font-size:10.411px;color:#8c8c8c;transform:scaleX(1.095)">Rien à afficher</div>

  <!-- Activities card : x930-1252 -> rel left 673 -->
  <div class="abs" style="left:673px;top:261px;width:322px;height:246px;background:#fff;border-radius:5px"></div>
  <div class="t" style="left:685.500px;top:277.013px;font-size:10.33px;font-weight:bold;color:#222;transform:scaleX(1.06)">Activités récentes</div>
  <div class="t" style="left:783px;top:277.002px;font-size:10.228px;color:#9c9c9c;transform:scaleX(1.095)">(Last 25)</div>
  <div class="abs" style="left:673px;top:302px;width:322px;height:1px;background:#f0f0f0"></div>
  <svg class="abs" style="left:682px;top:309.500px" width="11" height="11" viewBox="0 0 11 11"><circle cx="5.500" cy="5.500" r="4.500" fill="none" stroke="#3a98e6" stroke-width="1.100"/><path d="M3.600 7.400l1.600-1.600M5.800 5.200l1.600-1.600M5.200 3.600v1.600h-1.600M5.800 7.400V5.800h1.600" stroke="#3a98e6" stroke-width="0.800" fill="none"/></svg>
  <div class="t" style="left:696.500px;top:312px;font-size:9px;color:#333;transform:scaleX(1)">DC</div>
  <div class="t" style="left:682.500px;top:326.009px;font-size:7.75px;color:#bcbcbc;transform:scaleX(1.103)">Password changed</div>
  <div class="t" style="left:758.500px;top:326px;font-size:7.75px;color:#555;transform:scaleX(1.129)">il y a environ 5 jours</div>
  <div class="abs" style="left:673px;top:340px;width:322px;height:1px;background:#f0f0f0"></div>
  <svg class="abs" style="left:682px;top:347.500px" width="11" height="11" viewBox="0 0 11 11"><circle cx="5.500" cy="5.500" r="4.500" fill="none" stroke="#3a98e6" stroke-width="1.100"/><path d="M3.600 7.400l1.600-1.600M5.800 5.200l1.600-1.600M5.200 3.600v1.600h-1.600M5.800 7.400V5.800h1.600" stroke="#3a98e6" stroke-width="0.800" fill="none"/></svg>
  <div class="t" style="left:696.500px;top:350px;font-size:9px;color:#333;transform:scaleX(1)">DC</div>
  <div class="t" style="left:682.500px;top:365.009px;font-size:7.75px;color:#bcbcbc;transform:scaleX(1.135)">Entry edited</div>
  <div class="t" style="left:733px;top:365px;font-size:7.75px;color:#555;transform:scaleX(1.129)">il y a environ 5 jours</div>
  <div class="abs" style="left:673px;top:378px;width:322px;height:1px;background:#f0f0f0"></div>

  <!-- Demandes card: y 569-693 -> rel top 527 -->
  <div class="abs" style="left:331px;top:527px;width:322px;height:123px;background:#fff;border-radius:5px 5px 0 0"></div>
  <div class="t" style="left:343.500px;top:544.013px;font-size:10.33px;font-weight:bold;color:#222;transform:scaleX(1.075)">Demandes d'accès en attente</div>
  <div class="abs" style="left:331px;top:567.800px;width:322px;height:1px;background:#f0f0f0"></div>

  <!-- Types card -->
  <div class="abs" style="left:673px;top:527px;width:322px;height:123px;background:#fff;border-radius:5px 5px 0 0;overflow:hidden">
    <svg class="abs" style="left:0;top:0" width="322" height="124" viewBox="0 0 322 124">
      <!-- donut centre: abs (1012.4,707) -> rel (82.4,138) -->
      <g transform="translate(82.400,138)" fill="none" stroke-width="28">
        <path d="M15.85 -50.57A53 53 0 0 1 40.60 34.07" stroke="#ecb450"/>
        <path d="M-40.60 34.07A53 53 0 0 1 2.03 -52.96" stroke="#0a63c2"/>
        <path d="M2.77 -52.93A53 53 0 0 1 16.03 -50.52" stroke="#4da6ff"/>
        <path d="M3.30 -69.92L3.30 -35.96" stroke="#fff" stroke-width="1.300"/>
        <path d="M21.40 -66.65L11.01 -34.28" stroke="#fff" stroke-width="1.100"/>
      </g>
      <circle cx="182.700" cy="114.300" r="5.400" fill="#4da6ff"/>
    </svg>
  </div>
  <div class="t" style="left:685.500px;top:544.004px;font-size:10.33px;font-weight:bold;color:#222;transform:scaleX(1.07)">Types d'entrées</div>
  <div class="abs" style="left:673px;top:567.800px;width:322px;height:1px;background:#f0f0f0"></div>
  <div class="t" style="left:864.500px;top:638.011px;font-size:9.361px;color:#555;transform:scaleX(1.095)">Informations (1)</div>
</div>

<!-- ===== BOTTOM BAR ===== -->
<div id="bottombar" class="abs">
  <div class="t" style="left:16px;top:8.003px;font-size:7.306px;color:#cfcfcf;transform:scaleX(1.095)">2025.2.0</div>
</div>

</div>
</body>
</html>
